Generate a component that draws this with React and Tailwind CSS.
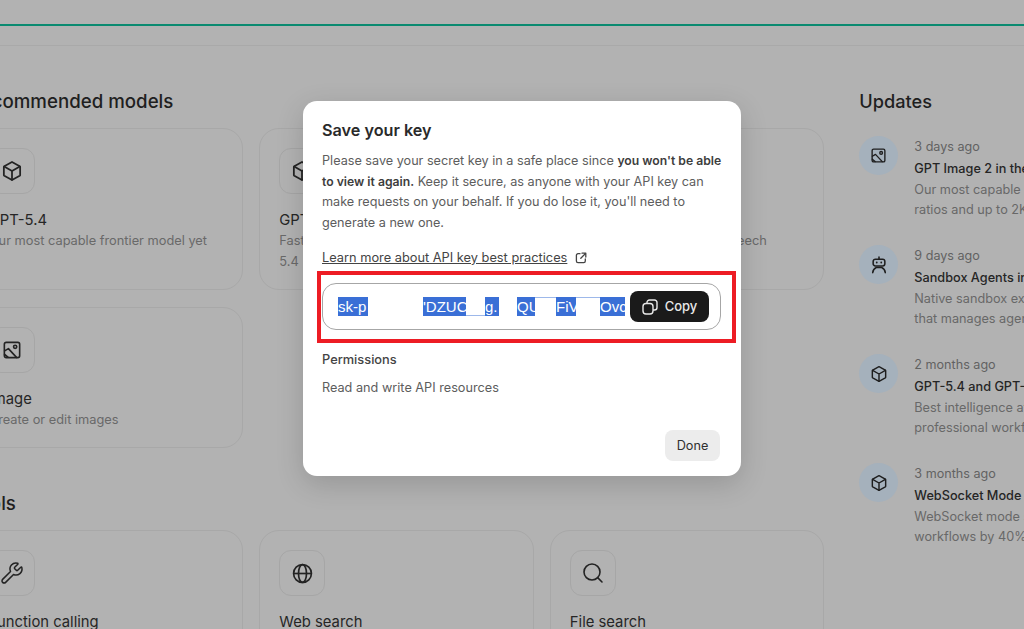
import React from "react";
import { Wrench, Search } from "lucide-react";

const font = { fontFamily: "Inter, 'Noto Sans', sans-serif" };

const Cube = ({ size = 22 }) => (
  <svg width={size} height={size} viewBox="0 0 20 20" fill="none" stroke="currentColor" strokeWidth="1.6" strokeLinejoin="round" strokeLinecap="round">
    <path d="M10 1.800 17 5.600a.8.8 0 0 1 .4.7v7.400a.8.8 0 0 1-.4.7L10 18.200 3 14.400a.8.8 0 0 1-.4-.7V6.300a.8.8 0 0 1 .4-.7L10 1.800Z" />
    <path d="M2.900 5.900 10 10l7.100-4.100M10 10v8" />
  </svg>
);

const ImageIcon = ({ size = 18 }) => (
  <svg width={size} height={size} viewBox="0 0 20 20" fill="none" stroke="currentColor" strokeWidth="1.800" strokeLinejoin="round" strokeLinecap="round">
    <rect x="1.500" y="1.500" width="17" height="17" rx="2" />
    <circle cx="13.500" cy="6.500" r="1.800" />
    <path d="M1.800 11 6 8.500l9 9.700M1.800 15l3.700 3" />
  </svg>
);

const Globe = ({ size = 21 }) => (
  <svg width={size} height={size} viewBox="0 0 20 20" fill="none" stroke="currentColor" strokeWidth="1.600">
    <circle cx="10" cy="10" r="8.500" />
    <ellipse cx="10" cy="10" rx="3.800" ry="8.500" />
    <path d="M1.500 10h17" />
  </svg>
);

const Robot = ({ size = 18 }) => (
  <svg width={size} height={size} viewBox="0 0 20 20" fill="none" stroke="currentColor" strokeWidth="1.700" strokeLinecap="round">
    <rect x="3.500" y="3.500" width="13" height="7.500" rx="2.500" />
    <path d="M10 1.200v2.300M3 18.500c.3-2.800 1.500-4.800 4-5.800M17 18.500c-.3-2.800-1.500-4.800-4-5.800M7 12.700h6" />
    <circle cx="7.500" cy="7.200" r="1" fill="currentColor" stroke="none" />
    <circle cx="12.500" cy="7.200" r="1" fill="currentColor" stroke="none" />
  </svg>
);

const External = () => (
  <svg width="12" height="12" viewBox="0 0 12 12" fill="none" stroke="currentColor" strokeWidth="1.300" strokeLinecap="round" strokeLinejoin="round">
    <path d="M5 1.700H3a1.600 1.600 0 0 0-1.600 1.600V9A1.600 1.600 0 0 0 3 10.600h5.700A1.600 1.600 0 0 0 10.300 9V7M7 1.200h3.800V5M10.600 1.400 5.800 6.200" />
  </svg>
);

const CopyIcon = () => (
  <svg width="16" height="16" viewBox="0 0 16 16" fill="none" stroke="currentColor" strokeWidth="1.400">
    <rect x="1" y="4.500" width="10" height="10.500" rx="3" />
    <path d="M5 4.500V3.500A2.500 2.500 0 0 1 7.500 1H12.500A2.500 2.500 0 0 1 15 3.500V8.500A2.500 2.500 0 0 1 12.500 11H11" />
  </svg>
);

function Card({ icon, title, desc, className = "" }) {
  return (
    <div className={`rounded-[20px] border border-[#a8a8a8] pl-[19px] pr-4 pt-[19px] ${className}`}>
      <div className="flex h-[46px] w-[46px] items-center justify-center rounded-xl border border-[#a6a6a6] text-[#232323]">
        {icon}
      </div>
      <div className="mt-[15.500px] text-[14.800px] leading-[20px] text-[#262626]">{title}</div>
      <div className="mt-[1.500px] text-[12.800px] leading-[20.500px] text-[#696969]">{desc}</div>
    </div>
  );
}

function Update({ icon, time, title, lines }) {
  return (
    <div className="flex h-[109px] gap-4 whitespace-nowrap">
      <div className="flex h-[39px] w-[39px] shrink-0 items-center justify-center rounded-full bg-[#a5b1bc] text-[#1e1e1e]">
        {icon}
      </div>
      <div className="pt-[1px]">
        <div className="text-[12.600px] leading-[20px] text-[#626262]">{time}</div>
        <div className="mt-[1px] text-[12.700px] font-medium leading-[21px] text-[#252525]">{title}</div>
        <div className="mt-[1px] text-[12.700px] leading-[19.500px] text-[#686868]">{lines[0]}</div>
        <div className="text-[12.700px] leading-[19.500px] text-[#686868]">{lines[1]}</div>
      </div>
    </div>
  );
}

function KeySelection() {
  const sel = "bg-[#3a6fd6] text-white";
  return (
    <div className="flex h-[19px] items-center text-[15px] leading-[19px]" style={{ fontFamily: "'Liberation Sans', Arial, sans-serif" }}>
      <span className={`${sel} w-[30px] overflow-hidden`}>sk-p</span>
      <span className={`${sel} ml-[55px] w-[43px] overflow-hidden whitespace-nowrap`}>'DZUC</span>
      <span className="h-[19px] w-[19px] border-b border-[#9db8ea]" />
      <span className={`${sel} w-[14px] overflow-hidden`}>g.</span>
      <span className={`${sel} ml-[18px] w-[18px] overflow-hidden`}>QU</span>
      <span className="h-[19px] w-[21px] border-t border-[#9db8ea]" />
      <span className={`${sel} w-[20px] overflow-hidden`}>FiV</span>
      <span className="h-[19px] w-[24px] border-t border-[#9db8ea]" />
      <span className={`${sel} w-[25px] overflow-hidden`}>Ovc</span>
    </div>
  );
}

export default function App() {
  return (
    <div className="relative h-[629px] w-[1024px] overflow-hidden bg-[#b2b2b2]" style={font}>
      <div className="h-6" />
      <div className="h-[2px] bg-[#0a8a70]" />
      <div className="h-[20px] border-b border-[#a9a9a9]" />

      <div className="ml-[-31.200px] mt-[42px] flex gap-[35px]">
        <main className="w-[855.500px] shrink-0">
          <h2 className="h-[27px] text-[18.700px] font-medium leading-[27px] text-[#1f1f1f]">Recommended models</h2>
          <div className="mt-[13px] grid grid-cols-3 gap-x-4 gap-y-[17px]">
            <Card className="h-[162px]" icon={<Cube />} title="GPT-5.4" desc="Our most capable frontier model yet" />
            <Card className="h-[162px]" icon={<Cube />} title="GPT-5.4 mini" desc="Faster, cost-efficient version of GPT-5.4" />
            <Card className="h-[162px]" icon={<Cube />} title="Text to speech" desc="Realistic & natural text to speech" />
            <Card className="h-[141px]" icon={<ImageIcon />} title="Image" desc="Create or edit images" />
          </div>
          <h2 className="mt-[42px] ml-[-1px] h-[27px] text-[18.700px] font-medium leading-[27px] text-[#1f1f1f]">Tools</h2>
          <div className="mt-[13px] grid grid-cols-3 gap-x-4">
            <Card className="h-[162px]" icon={<Wrench size={24} strokeWidth={1.500} />} title="Function calling" desc="" />
            <Card className="h-[162px]" icon={<Globe />} title="Web search" desc="" />
            <Card className="h-[162px]" icon={<Search size={24} strokeWidth={1.600} />} title="File search" desc="" />
          </div>
        </main>

        <aside className="w-[200px] shrink-0">
          <h2 className="h-[27px] text-[18.200px] font-medium leading-[27px] text-[#1f1f1f]">Updates</h2>
          <div className="mt-[21px]">
            <Update icon={<ImageIcon size={15} />} time="3 days ago" title="GPT Image 2 in the API" lines={["Our most capable image model", "ratios and up to 2K resolution"]} />
            <Update icon={<Robot size={18} />} time="9 days ago" title="Sandbox Agents in the SDK" lines={["Native sandbox execution", "that manages agents"]} />
            <Update icon={<Cube size={18} />} time="2 months ago" title="GPT-5.4 and GPT-5.4 mini" lines={["Best intelligence at scale", "professional workflows"]} />
            <Update icon={<Cube size={18} />} time="3 months ago" title="WebSocket Mode" lines={["WebSocket mode speeds up", "workflows by 40%"]} />
          </div>
        </aside>
      </div>

      {/* Dialog */}
      <div className="absolute left-[303px] top-[101px] flex h-[375px] w-[438px] flex-col rounded-[14px] bg-white pl-[19px] pr-[21px] pt-[18px] shadow-[0_8px_28px_rgba(0,0,0,0.16)]">
        <h1 className="text-[16.200px] font-semibold leading-[22px] text-[#2a2a2a]">Save your key</h1>
        <p className="mr-[-6px] mt-[10px] text-[12.650px] leading-[20.500px] text-[#5d5d5d]">
          Please save your secret key in a safe place since{" "}
          <strong className="font-semibold text-[#3d3d3d] text-[12.200px]">you won't be able to view it again.</strong>{" "}
          Keep it secure, as anyone with your API key can make requests on your behalf. If you do lose it, you'll need to generate a new one.
        </p>
        <div className="mt-[15px] flex items-center gap-[8px] text-[12.800px] leading-[20px] text-[#444444]">
          <span className="underline">Learn more about API key best practices</span>
          <External />
        </div>

        <div className="ml-[-5px] mt-[3px] h-[72px] w-[419px] border-4 border-[#ed1c24] py-2 pl-[1px]">
          <div className="flex h-[47px] w-[399px] items-center justify-between rounded-[14px] border border-[#a6a6a6] pl-[15px] pr-[11px]">
            <KeySelection />
            <button className="flex h-[31px] w-[79px] items-center justify-center gap-[7px] rounded-lg bg-[#1a1a1a] text-[13px] font-medium text-[#e8e8e8]">
              <CopyIcon />
              Copy
            </button>
          </div>
        </div>

        <div className="mt-[7px] text-[12.800px] font-medium leading-[20px] text-[#444444]">Permissions</div>
        <div className="mt-[8px] text-[12.700px] leading-[20px] text-[#5d5d5d]">Read and write API resources</div>

        <div className="mb-[15px] mt-auto flex justify-end">
          <button className="h-[31px] w-[55px] rounded-lg bg-[#ececec] text-[12.700px] text-[#2f2f2f]">Done</button>
        </div>
      </div>
    </div>
  );
}
